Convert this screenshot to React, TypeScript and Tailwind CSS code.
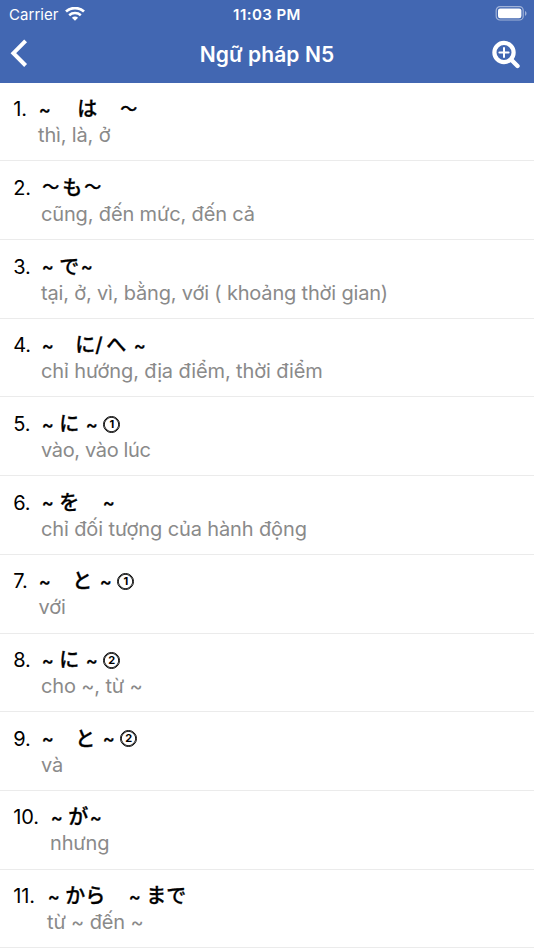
type Glyph = {
  text: string;
  className: string;
  circled?: boolean;
};

type Lesson = {
  id: number;
  title: Glyph[];
  meaning: string;
  meaningClass: string;
};

const lessons: Lesson[] = [
  {
    id: 1,
    title: [
      { text: "~", className: "w-[39px]" },
      { text: "は", className: "w-[42px]" },
      { text: "～", className: "w-5" },
    ],
    meaning: "thì, là, ở",
    meaningClass: "ml-[38px]",
  },
  {
    id: 2,
    title: [
      { text: "～", className: "w-[21px]" },
      { text: "も", className: "w-[21px]" },
      { text: "～", className: "w-5" },
    ],
    meaning: "cũng, đến mức, đến cả",
    meaningClass: "ml-[41px]",
  },
  {
    id: 3,
    title: [
      { text: "~", className: "w-[18px]" },
      { text: "で", className: "w-[21px]" },
      { text: "~", className: "w-5" },
    ],
    meaning: "tại, ở, vì, bằng, với ( khoảng thời gian)",
    meaningClass: "ml-[41px] tracking-[-0.18px]",
  },
  {
    id: 4,
    title: [
      { text: "~", className: "w-[34px]" },
      { text: "に", className: "w-5" },
      { text: "/", className: "w-[11px]" },
      { text: "へ", className: "w-[27px]" },
      { text: "~", className: "w-5" },
    ],
    meaning: "chỉ hướng, địa điểm, thời điểm",
    meaningClass: "ml-[41px] tracking-[-0.12px]",
  },
  {
    id: 5,
    title: [
      { text: "~", className: "w-[18px]" },
      { text: "に", className: "w-[26px]" },
      { text: "~", className: "w-[18px]" },
      { text: "1", className: "w-[17px]", circled: true },
    ],
    meaning: "vào, vào lúc",
    meaningClass: "ml-[41px] tracking-[-0.35px]",
  },
  {
    id: 6,
    title: [
      { text: "~", className: "w-[18px]" },
      { text: "を", className: "w-[43px]" },
      { text: "~", className: "w-5" },
    ],
    meaning: "chỉ đối tượng của hành động",
    meaningClass: "ml-[41px] tracking-[-0.12px]",
  },
  {
    id: 7,
    title: [
      { text: "~", className: "w-[34px]" },
      { text: "と", className: "w-[27px]" },
      { text: "~", className: "w-[18px]" },
      { text: "1", className: "w-[17px]", circled: true },
    ],
    meaning: "với",
    meaningClass: "ml-[38.5px]",
  },
  {
    id: 8,
    title: [
      { text: "~", className: "w-[18px]" },
      { text: "に", className: "w-[26px]" },
      { text: "~", className: "w-[18px]" },
      { text: "2", className: "w-[17px]", circled: true },
    ],
    meaning: "cho ~, từ ~",
    meaningClass: "ml-[41px]",
  },
  {
    id: 9,
    title: [
      { text: "~", className: "w-[34px]" },
      { text: "と", className: "w-[27px]" },
      { text: "~", className: "w-[18px]" },
      { text: "2", className: "w-[17px]", circled: true },
    ],
    meaning: "và",
    meaningClass: "ml-[41px]",
  },
  {
    id: 10,
    title: [
      { text: "~", className: "w-[18px]" },
      { text: "が", className: "w-[21px]" },
      { text: "~", className: "w-5" },
    ],
    meaning: "nhưng",
    meaningClass: "ml-[50px]",
  },
  {
    id: 11,
    title: [
      { text: "~", className: "w-[18px]" },
      { text: "から", className: "w-[63px]" },
      { text: "~", className: "w-[18px]" },
      { text: "まで", className: "w-10" },
    ],
    meaning: "từ ~ đến ~",
    meaningClass: "ml-[47px]",
  },
];

// The title starts after the number, so its column depends on the digits.
function numberWidth(id: number) {
  if (id === 10) return "w-[37px]";
  if (id === 11) return "w-[34px]";
  if (id === 1 || id === 7) return "w-[25px]";
  return "w-7";
}

function StatusBar() {
  return (
    <div className="grid h-7 grid-cols-3 items-center">
      <div className="flex items-center gap-[6px] pl-[9px] text-[15px] leading-none tracking-[0.05px]">
        Carrier
        <svg width="20" height="15" viewBox="0 0 20 15" fill="none">
          <path d="M1 4.6C6.1-.1 13.9-.1 19 4.6" stroke="white" strokeWidth="2.7" />
          <path d="M4.2 8.2c3.3-2.9 8.3-2.9 11.6 0" stroke="white" strokeWidth="2.5" />
          <path d="M6.9 10.7c1.8-1.6 4.4-1.6 6.2 0L10 13.8z" fill="white" />
        </svg>
      </div>
      <div className="text-center text-[15px] leading-none font-semibold tracking-[0.45px]">
        11:03 PM
      </div>
      <div className="flex justify-end pr-[7px]">
        <svg width="32" height="16" viewBox="0 0 32 16" fill="none">
          <rect x="1.2" y="0.6" width="27" height="13.4" rx="3.8" stroke="white" strokeOpacity="0.5" strokeWidth="1.2" />
          <rect x="3" y="2.4" width="23.4" height="9.8" rx="2.2" fill="white" />
          <path d="M30 4.9c2 .8 2 4 0 4.8z" fill="white" fillOpacity="0.5" />
        </svg>
      </div>
    </div>
  );
}

function NavBar() {
  return (
    <div className="flex h-[55px] items-center justify-between pr-[13px] pb-[3px] pl-[9px]">
      <button type="button" aria-label="Back" className="w-[34px]">
        <svg width="20" height="30" viewBox="0 0 20 30" fill="none">
          <path d="M16.6 1.9 4.4 14.2l12.2 12.3" stroke="white" strokeWidth="4" />
        </svg>
      </button>
      <h1 className="text-[21px] leading-none font-semibold tracking-[0.1px]">Ngữ pháp N5</h1>
      <button type="button" aria-label="Search">
        <svg width="30" height="30" viewBox="0 0 30 30" fill="none" stroke="white">
          <circle cx="13" cy="13.5" r="9.6" strokeWidth="4.2" />
          <path d="M8.4 13.5h9.2M13 8.9v9.2" strokeWidth="2" strokeLinecap="round" />
          <path d="m20.5 21 6 6" strokeWidth="4.4" strokeLinecap="round" />
        </svg>
      </button>
    </div>
  );
}

function TitleGlyph({ glyph }: { glyph: Glyph }) {
  if (glyph.circled) {
    return (
      <span
        className={`${glyph.className} grid h-[17px] shrink-0 place-items-center rounded-full border border-black text-[11px] leading-none font-bold shadow-[inset_0_0_0_0.8px_#000]`}
      >
        {glyph.text}
      </span>
    );
  }

  const size =
    glyph.text === "～"
      ? "pl-[1px] text-[17px]"
      : glyph.text === "~"
        ? "pl-[0.5px] pt-px text-[18px]"
        : "text-[20px]";

  return (
    <span
      lang="ja"
      className={`${glyph.className} ${size} shrink-0 font-medium [-webkit-text-stroke:0.3px_black]`}
    >
      {glyph.text}
    </span>
  );
}

function LessonRow({ lesson }: { lesson: Lesson }) {
  return (
    <li className="h-[78.7px] border-b-[1.5px] border-[#ebebeb] pt-[13.6px]">
      <div className="flex h-[26px] items-center pl-[13.3px] text-[20px] leading-none whitespace-nowrap text-black">
        <span className={`${numberWidth(lesson.id)} shrink-0 tracking-[-0.2px]`}>
          {lesson.id}.
        </span>
        {lesson.title.map((glyph, index) => (
          <TitleGlyph key={index} glyph={glyph} />
        ))}
      </div>
      <p className="text-[20px] leading-[26px] tracking-[-0.15px] whitespace-nowrap text-[#8a8a8a]">
        <span className={lesson.meaningClass}>{lesson.meaning}</span>
      </p>
    </li>
  );
}

export default function App() {
  return (
    <div className="h-[950px] w-[534px] overflow-hidden bg-white font-['Inter','Noto_Sans_CJK_JP',sans-serif]">
      <header className="h-[82.7px] bg-[#4267b2] text-white">
        <StatusBar />
        <NavBar />
      </header>
      <ul>
        {lessons.map((lesson) => (
          <LessonRow key={lesson.id} lesson={lesson} />
        ))}
      </ul>
    </div>
  );
}
